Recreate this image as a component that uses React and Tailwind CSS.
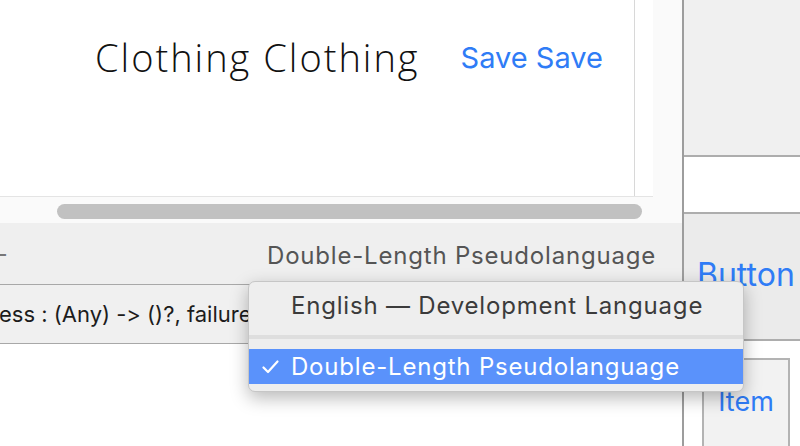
import React from "react";

const sf = { fontFamily: "Inter, 'Noto Sans', sans-serif", fontFeatureSettings: "'calt' 0" };

function Check() {
  return (
    <svg width="17" height="14" viewBox="0 0 17 14" fill="none">
      <path d="M1.5 7.5 L6 12 L15.5 1.5" stroke="white" strokeWidth="2.2" strokeLinecap="round" strokeLinejoin="round" />
    </svg>
  );
}

function LanguageMenu() {
  return (
    <div
      className="absolute left-[248px] top-[281px] h-[111px] w-[496px] rounded-[7px] border border-[#c6c6c6] bg-[#eeeeee] shadow-[0_6px_18px_rgba(0,0,0,0.28)]"
      style={sf}
    >
      <div className="flex h-[48px] items-center pl-[42px] text-[24px] tracking-[0.8px] text-[#3b3b3b]">
        English — Development Language
      </div>
      <div className="mt-[5px] h-[4px] bg-[#dedede]" />
      <div className="mt-[10px] flex h-[35px] items-center bg-[#5a92fb] text-[24px] tracking-[0.8px] text-white">
        <span className="flex w-[42px] pl-[13px]">
          <Check />
        </span>
        <span>Double-Length Pseudolanguage</span>
      </div>
    </div>
  );
}

export default function App() {
  return (
    <div className="relative flex h-[446px] w-[800px] overflow-hidden bg-white">
      {/* Left: storyboard canvas + bars */}
      <div className="flex w-[682px] shrink-0 flex-col bg-[#fafafa]">
        <div className="h-[197px] w-[653px] shrink-0 border-b border-[#e4e4e4] bg-white">
          <div className="flex h-full w-[635px] items-start border-r border-[#d8d8d8] pt-[32px]">
            <span
              className="ml-[95px] text-[38px] font-light leading-[50px] tracking-[2px] text-[#111]"
              style={{ fontFamily: "'Open Sans', Lato, sans-serif" }}
            >
              Clothing Clothing
            </span>
            <span className="ml-[41px] mt-[8px] text-[29px] leading-[36px] text-[#2f7cf6]" style={sf}>
              Save Save
            </span>
          </div>
        </div>
        <div className="h-[26px] shrink-0 pt-[7px]">
          <div className="ml-[57px] h-[15px] w-[585px] rounded-full bg-[#c1c1c1]" />
        </div>
        <div
          className="flex h-[62px] shrink-0 items-center justify-between border-b border-[#a8a8a8] bg-[#efefef] pr-[26px] text-[24px] tracking-[0.8px] text-[#555]"
          style={sf}
        >
          <span className="-ml-[6px] text-[#777]">–</span>
          <span className="pt-[4px]">Double-Length Pseudolanguage</span>
        </div>
        <div
          className="flex h-[59px] shrink-0 items-center overflow-hidden whitespace-nowrap border-b border-[#a8a8a8] bg-[#f0f0f0] text-[22px] text-[#1c1c1c]"
          style={sf}
        >
          <span className="-ml-[1px]">ess : (Any) -&gt; ()?, failure: (Error) -&gt; ()?</span>
        </div>
        <div className="flex-1 bg-white" />
      </div>

      {/* Right: object library column */}
      <div className="flex w-[118px] shrink-0 flex-col border-l-2 border-[#9d9d9d]">
        <div className="h-[157px] shrink-0 border-b-2 border-[#adadad] bg-[#f0f0f0]" />
        <div className="h-[57px] shrink-0 border-b-2 border-[#adadad] bg-white" />
        <div className="flex h-[127px] shrink-0 items-start border-b-2 border-[#adadad] bg-[#ebebeb] pt-[42px] pl-[13px]">
          <span className="text-[32px] leading-[38px] text-[#2f7cf6]" style={sf}>Button</span>
        </div>
        <div className="flex-1 bg-white pl-[18px] pt-[17px]">
          <div className="flex h-[100px] w-[88px] items-start justify-center border-2 border-[#b3b3b3] bg-[#f2f2f2] pt-[26px]">
            <span className="text-[27px] leading-[32px] text-[#2f7cf6]" style={sf}>Item</span>
          </div>
        </div>
      </div>

      <LanguageMenu />
    </div>
  );
}
